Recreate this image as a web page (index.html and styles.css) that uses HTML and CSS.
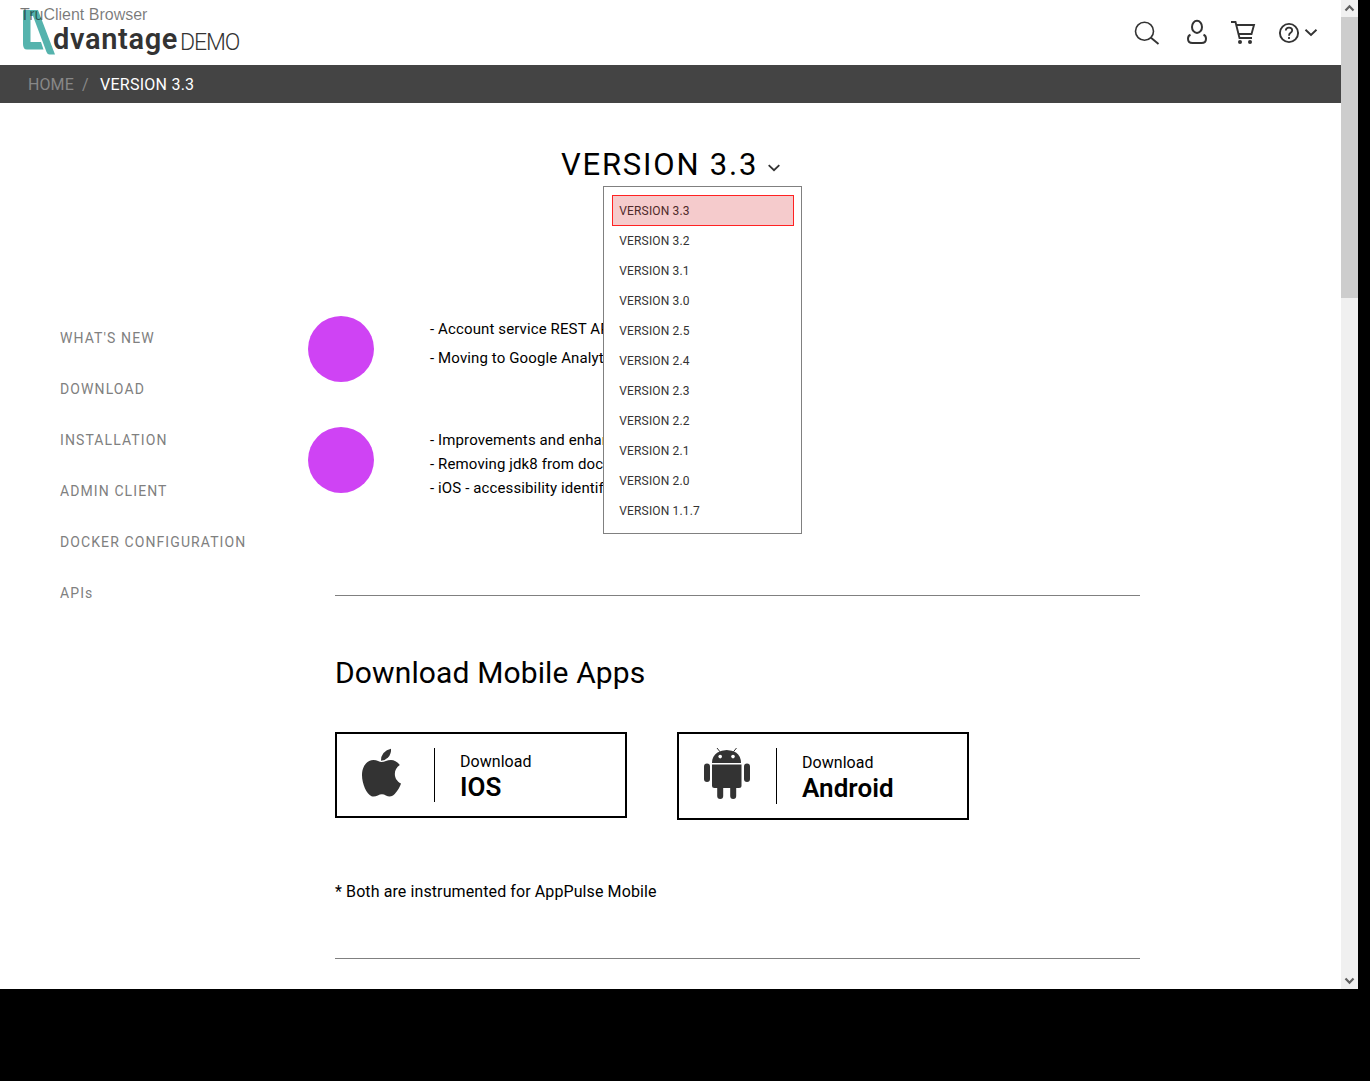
FILE: index.html
```html
<!DOCTYPE html>
<html lang="en">
<head>
<meta charset="utf-8">
<title>Advantage DEMO - Version 3.3</title>
<link rel="stylesheet" href="styles.css">
</head>
<body>
<div class="window">
  <div class="page">
    <header class="header">
      <a class="logo">
        <svg class="logo-mark" width="34" height="48" viewBox="0 0 34 48"><path fill="#55b3ad" d="M2 2H16L33 46.500H27.500Q25.500 46.500 24.500 44L11 8H8.500V34H19L21.500 41.500H5Q1 41.500 1 36V3Q1 2 2 2Z"/></svg>
        <span class="logo-name">dvantage</span><span class="logo-demo">DEMO</span>
      </a>
      <span class="watermark">TruClient Browser</span>
      <nav class="tools">
        <svg width="200" height="36" viewBox="1130 15 200 36" fill="none" stroke="#333">
          <circle cx="1144.500" cy="31.300" r="9" stroke-width="1.600"/><path d="M1151 37.800L1158.500 44" stroke-width="1.900"/>
          <ellipse cx="1197" cy="26.900" rx="5" ry="6.100" stroke-width="2"/>
          <path d="M1190.500 34.800Q1188 35.800 1188 38.700Q1188 43 1192.500 43H1201.500Q1206 43 1206 38.700Q1206 35.800 1203.500 34.800" stroke-width="2"/>
          <path d="M1231 22H1235.500L1239.500 38H1252M1236.500 25H1254L1251.500 34H1238.500" stroke-width="1.900"/>
          <circle cx="1240" cy="42" r="2" fill="#333" stroke="none"/><circle cx="1250" cy="42" r="2" fill="#333" stroke="none"/>
          <circle cx="1289" cy="33" r="9.100" stroke-width="1.900"/>
          <path d="M1285.800 30.500Q1286 27.700 1289 27.700Q1292.200 27.700 1292.200 30.300Q1292.200 31.700 1290.600 32.800Q1289 33.900 1289 35.700M1289 37V39" stroke-width="1.800"/>
          <path d="M1305.500 29.700L1311 35L1316.500 29.700" stroke-width="1.900"/>
        </svg>
      </nav>
    </header>
    <div class="crumbs"><span class="crumb-home">HOME</span><span class="crumb-sep">/</span><span class="crumb-now">VERSION 3.3</span></div>
    <div class="title-row">
      <div class="picker">
        <h1>VERSION 3.3</h1>
        <svg class="chevron" width="12" height="8" viewBox="0 0 12 8"><path d="M.7 1.200L6 6.200L11.300 1.200" fill="none" stroke="#333" stroke-width="1.800"/></svg>
        <ul class="menu">
          <li class="selected">VERSION 3.3</li><li>VERSION 3.2</li><li>VERSION 3.1</li><li>VERSION 3.0</li><li>VERSION 2.5</li><li>VERSION 2.4</li><li>VERSION 2.3</li><li>VERSION 2.2</li><li>VERSION 2.1</li><li>VERSION 2.0</li><li>VERSION 1.1.7</li>
        </ul>
      </div>
    </div>
    <div class="body">
      <nav class="side">
        <a>WHAT'S NEW</a><a>DOWNLOAD</a><a>INSTALLATION</a><a>ADMIN CLIENT</a><a>DOCKER CONFIGURATION</a><a>APIs</a>
      </nav>
      <main class="main">
        <section class="news">
          <div class="entry"><i class="dot"></i><div class="lines loose"><p>- Account service REST API</p><p>- Moving to Google Analytics</p></div></div>
          <div class="entry"><i class="dot"></i><div class="lines"><p>- Improvements and enhancements</p><p>- Removing jdk8 from docker</p><p>- iOS - accessibility identifiers</p></div></div>
        </section>
        <section class="apps">
          <h2>Download Mobile Apps</h2>
          <div class="cards">
            <a class="card">
              <span class="card-icon"><svg width="40" height="50" viewBox="0.5 0.3 40 50" fill="#333"><path d="M29.500 1Q30 6 26.500 9.800Q23.500 13 19.500 13Q19.200 8.700 22 5.200Q25 2 29.500 1Z"/><path d="M20 14.300C23 14.300 25.500 12.300 29.500 12.300C33 12.300 36.500 14.500 38.300 17.300C31.500 21.500 31.500 32 39.500 35.700C38.500 39.500 34 46.500 30.500 48.300C26.500 50 24 46.500 20.500 46.500C17 46.500 14 50 10 48.500C5 46.500 .5 36 .5 27.500C.5 18 6 12.300 12 12.300C15.500 12.300 18 14.300 20 14.300Z"/></svg></span>
              <span class="card-text"><span class="small">Download</span><strong>IOS</strong></span>
            </a>
            <a class="card card-android">
              <span class="card-icon"><svg width="46" height="52" viewBox="0 1 46 52" fill="#333"><path d="M13 1L17 6M32.500 1L28.500 6" stroke="#333" stroke-width="1"/><path d="M8 16Q8 9 13.500 5.500Q17.500 3 22.700 3Q28 3 32 5.500Q37 9 37 16Z"/><circle cx="16.200" cy="9.600" r="1.800" fill="#fff"/><circle cx="29" cy="9.600" r="1.800" fill="#fff"/><path d="M8 17.500H37.500V38.500Q37.500 41 35 41H10.500Q8 41 8 38.500Z"/><rect y="16.500" width="6" height="18.500" rx="3"/><rect x="40" y="16.500" width="6" height="18.500" rx="3"/><path d="M13.200 39H19.200V49Q19.200 52 16.200 52Q13.200 52 13.200 49ZM26.200 39H32.200V49Q32.200 52 29.200 52Q26.200 52 26.200 49Z"/></svg></span>
              <span class="card-text"><span class="small">Download</span><strong>Android</strong></span>
            </a>
          </div>
          <p class="note">* Both are instrumented for AppPulse Mobile</p>
        </section>
      </main>
    </div>
  </div>
  <div class="scrollbar">
    <svg width="17" height="17" viewBox="0 0 17 17"><path d="M4.500 10.500L8.500 6.300L12.500 10.500" fill="none" stroke="#606060" stroke-width="2.200"/></svg>
    <div class="thumb"></div>
    <svg width="17" height="17" viewBox="0 0 17 17"><path d="M4.500 6.500L8.500 10.700L12.500 6.500" fill="none" stroke="#606060" stroke-width="2.200"/></svg>
  </div>
</div>
</body>
</html>
```
FILE: styles.css
```css
* { box-sizing: border-box; margin: 0; padding: 0; }
body { background: #000; color: #000; font-family: Roboto, sans-serif; overflow: hidden; }
.window { display: flex; width: 1358px; height: 989px; }
.page { width: 1341px; background: #fff; overflow: hidden; }

.header { position: relative; display: flex; justify-content: space-between; height: 65px; padding: 8px 11px 0 22px; }
.logo { display: flex; align-items: flex-start; color: #333; white-space: nowrap; }
.logo-mark { width: 34px; margin-right: -3px; }
.logo-name { width: 127px; padding-top: 14px; font-size: 29px; font-weight: 600; line-height: 35px; letter-spacing: 0.65px; }
.logo-demo { padding-top: 21px; font-size: 23px; font-weight: 300; line-height: 27px; letter-spacing: -1.1px; }
.watermark { position: absolute; left: 20px; top: 5px; font: 16px/20px "Liberation Sans", Arial, sans-serif; color: rgba(0, 0, 0, .53); }
.tools { padding-top: 7px; }

.crumbs { display: flex; height: 38px; padding-left: 28px; background: #444; color: #fff; font-size: 16px; line-height: 39px; }
.crumb-home { width: 54px; color: #888; letter-spacing: 0.1px; }
.crumb-sep { width: 18px; color: #888; }
.crumb-now { letter-spacing: 0.25px; }

.title-row { display: flex; height: 213px; padding: 41px 0 0 561px; }
.picker { position: relative; display: flex; height: 40px; }
h1 { width: 207px; font-size: 31px; font-weight: 400; line-height: 42px; letter-spacing: 1.8px; white-space: nowrap; }
.chevron { margin-top: 20px; }
.menu { position: absolute; left: 42px; top: 42px; width: 199px; height: 348px; padding: 8px; border: 1px solid #808080; background: #fff; list-style: none; color: #333; font-size: 12px; letter-spacing: 0.15px; }
.menu li { height: 30px; padding-left: 7.3px; line-height: 32px; }
.menu .selected { width: 182px; height: 31px; margin-bottom: -1px; padding-left: 6.3px; border: 1px solid #f22; background: #f5cbcc; color: #4e2929; line-height: 30px; }

.body { display: flex; }
.side { display: flex; flex-direction: column; width: 308px; padding: 10px 0 0 60px; color: #808080; font-size: 14px; letter-spacing: 1.1px; }
.side a { height: 51px; line-height: 25px; }
.news { display: flex; flex-direction: column; gap: 45px; width: 832px; height: 280px; }
.news::after { content: ""; height: 1px; margin: auto 0 0 27px; background: #808080; }
.entry { display: flex; height: 66px; }
.dot { width: 66px; height: 66px; border-radius: 50%; background: #cf43f4; }
.lines { margin-left: 56px; padding-top: 1px; font-size: 15px; line-height: 24px; letter-spacing: 0.12px; }
.loose p { height: 29px; }
.apps { display: flex; flex-direction: column; width: 805px; height: 363px; margin-left: 27px; border-bottom: 1px solid #808080; }
h2 { height: 136px; padding-top: 57px; font-size: 30px; font-weight: 400; line-height: 40px; letter-spacing: 0.13px; }
.cards { display: flex; align-items: flex-start; gap: 50px; height: 88px; }
.card { display: flex; width: 292px; height: 86px; padding: 14px 0 0 25px; border: 2px solid #000; }
.card-icon { width: 73px; height: 54px; border-right: 1px solid #000; }
.card-text { display: flex; flex-direction: column; margin-left: 25px; }
.small { height: 25px; font-size: 16px; line-height: 27px; letter-spacing: 0.05px; }
strong { font-size: 26px; font-weight: 600; line-height: 29px; letter-spacing: 0.05px; }
.card-android { height: 88px; }
.card-android .card-icon { height: 56px; }
.card-android .card-text { padding-top: 1px; }
.note { padding-top: 62px; font-size: 16px; line-height: 20px; letter-spacing: 0.1px; }

.scrollbar { display: flex; flex-direction: column; width: 17px; background: #f0f0f0; }
.thumb { height: 281px; margin-bottom: auto; background: #cdcdcd; }
```
